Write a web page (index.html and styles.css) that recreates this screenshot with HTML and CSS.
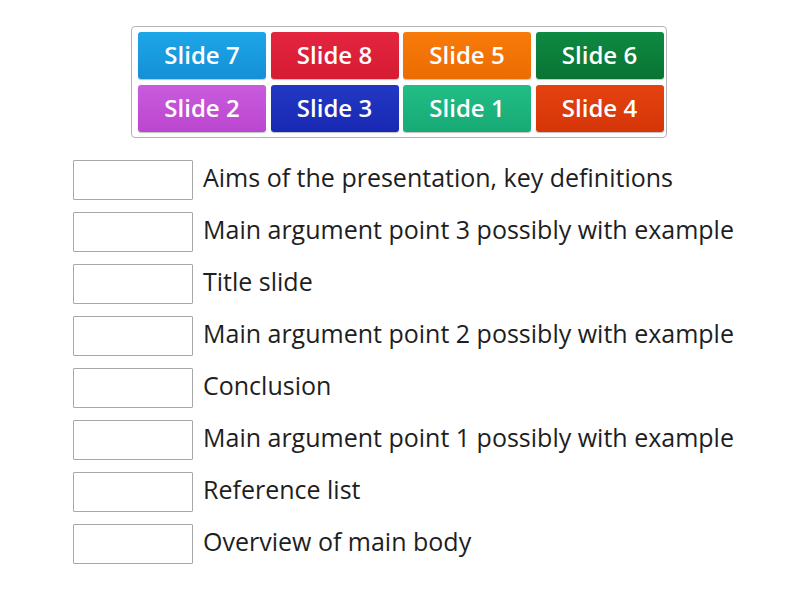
FILE: index.html
```html
<!DOCTYPE html>
<html>
<head>
<meta charset="utf-8">
<link rel="stylesheet" href="styles.css">
</head>
<body>
<div class="page">
  <div class="bank">
    <div class="tile c-blue">Slide 7</div>
    <div class="tile c-red">Slide 8</div>
    <div class="tile c-orange">Slide 5</div>
    <div class="tile c-green">Slide 6</div>
    <div class="tile c-purple">Slide 2</div>
    <div class="tile c-navy">Slide 3</div>
    <div class="tile c-teal">Slide 1</div>
    <div class="tile c-vermilion">Slide 4</div>
  </div>
  <div class="rows">
    <div class="row"><div class="slot"></div><div class="label">Aims of the presentation, key definitions</div></div>
    <div class="row"><div class="slot"></div><div class="label">Main argument point 3 possibly with example</div></div>
    <div class="row"><div class="slot"></div><div class="label">Title slide</div></div>
    <div class="row"><div class="slot"></div><div class="label">Main argument point 2 possibly with example</div></div>
    <div class="row"><div class="slot"></div><div class="label">Conclusion</div></div>
    <div class="row"><div class="slot"></div><div class="label">Main argument point 1 possibly with example</div></div>
    <div class="row"><div class="slot"></div><div class="label">Reference list</div></div>
    <div class="row"><div class="slot"></div><div class="label">Overview of main body</div></div>
  </div>
</div>
</body>
</html>
```
FILE: styles.css
```css
html, body {
  margin: 0;
  padding: 0;
  background: #ffffff;
  font-family: "Open Sans", "Liberation Sans", sans-serif;
}
.page {
  width: 800px;
  height: 600px;
  padding-top: 26px;
  box-sizing: border-box;
}
.bank {
  width: 536px;
  box-sizing: border-box;
  margin: 0 auto 0 131px;
  border: 1px solid #b4b4b4;
  border-radius: 4px;
  padding: 5px 5px 5px 6px;
  display: grid;
  grid-template-columns: repeat(4, 128px);
  grid-auto-rows: 47px;
  column-gap: 4.5px;
  row-gap: 6px;
}
.tile {
  border-radius: 3px;
  color: #ffffff;
  font-size: 24px;
  font-weight: 600;
  display: flex;
  align-items: center;
  justify-content: center;
  box-shadow: 0 1px 1px rgba(0,0,0,0.25);
  padding-bottom: 3px;
  box-sizing: border-box;
}
.c-blue { background: linear-gradient(#1ca6e8, #168fd6); }
.c-red { background: linear-gradient(#e42540, #d61b32); }
.c-orange { background: linear-gradient(#f77b0a, #ec6c02); }
.c-green { background: linear-gradient(#0e8a42, #0a7334); }
.c-purple { background: linear-gradient(#c95bdc, #bb46d0); }
.c-navy { background: linear-gradient(#2238c4, #1828b2); }
.c-teal { background: linear-gradient(#22bd86, #17aa75); }
.c-vermilion { background: linear-gradient(#e4420f, #d63508); }
.rows {
  margin-top: 22px;
  margin-left: 73px;
  display: flex;
  flex-direction: column;
  gap: 12px;
}
.row {
  display: flex;
  align-items: center;
  height: 40px;
}
.slot {
  width: 120px;
  height: 40px;
  box-sizing: border-box;
  border: 1px solid #a8a8a8;
  border-radius: 1px;
  flex: none;
}
.label {
  margin-left: 10px;
  font-size: 25px;
  color: #1e1e1e;
  white-space: nowrap;
  padding-bottom: 7px;
}
```
